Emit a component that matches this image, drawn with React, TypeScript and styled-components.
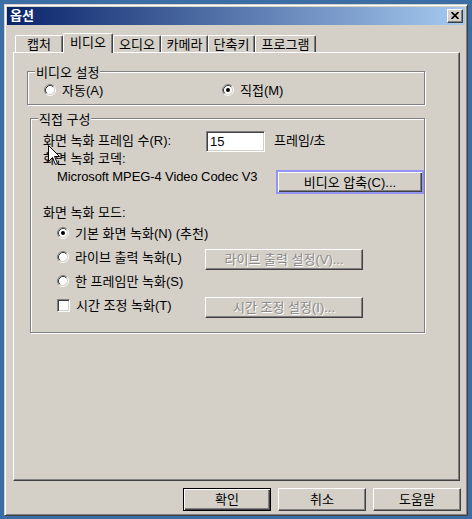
import React from "react";
import styled, { createGlobalStyle, css } from "styled-components";

const Global = createGlobalStyle`
  html, body { margin: 0; padding: 0; background: #3a6ea5; }
  body {
    font-family: "Liberation Sans", "Noto Sans CJK KR", sans-serif;
    font-size: 13px;
    letter-spacing: 0px;
    color: #000;
    white-space: nowrap;
  }
  * { box-sizing: border-box; }
`;

const Desktop = styled.div`
  position: relative;
  width: 472px;
  height: 519px;
  padding: 4px 0 0 4px;
  background: #3a6ea5;
  overflow: hidden;
`;

const Window = styled.div`
  width: 464px;
  height: 512px;
  display: flex;
  flex-direction: column;
  background: #d4d0c8;
  border: 1px solid;
  border-color: #d4d0c8 #404040 #404040 #d4d0c8;
  box-shadow: inset 1px 1px #fff, inset -1px -1px #808080;
  padding: 2px;
`;

const TitleBar = styled.div`
  flex: none;
  height: 18px;
  display: flex;
  align-items: center;
  justify-content: space-between;
  padding: 0 2px 0 3px;
  background: linear-gradient(to right, #0a246a, #a6caf0);
`;

const Title = styled.span`
  color: #fff;
  font-weight: bold;
  line-height: 14px;
`;

const CloseButton = styled.div`
  width: 16px;
  height: 14px;
  background: #d4d0c8;
  border: 1px solid;
  border-color: #fff #404040 #404040 #fff;
  box-shadow: inset -1px -1px #808080;
  display: flex;
  align-items: center;
  justify-content: center;
  padding-bottom: 1px;
`;

const Body = styled.div`
  flex: 1;
  display: flex;
  flex-direction: column;
  padding: 8px 4px 2px 6px;
`;

const TabStrip = styled.div`
  flex: none;
  height: 19px;
  display: flex;
  align-items: flex-end;
  padding-left: 2px;
`;

const Tab = styled.div<{ $w: number; $active?: boolean }>`
  position: relative;
  width: ${(p) => p.$w}px;
  height: ${(p) => (p.$active ? 20 : 17)}px;
  margin-bottom: ${(p) => (p.$active ? -1 : 0)}px;
  z-index: ${(p) => (p.$active ? 1 : 0)};
  background: #d4d0c8;
  border-top: 1px solid #fff;
  border-left: 1px solid #fff;
  border-right: 1px solid #404040;
  box-shadow: inset -1px 0 #808080;
  border-radius: 2px 2px 0 0;
  display: flex;
  align-items: center;
  justify-content: center;
  line-height: 13px;
  padding-bottom: ${(p) => (p.$active ? 3 : 0)}px;
`;

const Panel = styled.div`
  flex: none;
  height: 429px;
  margin-right: 1px;
  background: #d4d0c8;
  border: 1px solid;
  border-color: #fff #404040 #404040 #fff;
  box-shadow: inset -1px -1px #808080;
  padding: 18px 0 0 13px;
  display: flex;
  flex-direction: column;
  align-items: flex-start;
`;

const Group = styled.div<{ $w: number; $indent?: number; $top?: number }>`
  position: relative;
  width: ${(p) => p.$w}px;
  margin-left: ${(p) => p.$indent ?? 0}px;
  margin-top: ${(p) => p.$top ?? 0}px;
  border: 1px solid #808080;
  box-shadow: inset 1px 1px #fff, 1px 1px #fff;
`;

const GroupTitle = styled.span`
  position: absolute;
  top: -6px;
  left: 7px;
  padding: 0 1px;
  background: #d4d0c8;
  line-height: 13px;
`;

const ModeGroupBody = styled.div`
  padding: 10px 0 6px 16px;
  display: grid;
  grid-template-columns: 178px auto;
  height: 32px;
`;

const OptionLine = styled.label`
  display: flex;
  align-items: center;
  gap: 6px;
  height: 16px;
  line-height: 13px;
  & > * { flex: none; }
`;

const ConfigBody = styled.div`
  padding: 12px 0 15px 12px;
  display: flex;
  flex-direction: column;
`;

const FpsRow = styled.div`
  display: flex;
  align-items: center;
  height: 21px;
  line-height: 13px;
`;

const FpsLabel = styled.span`
  width: 163px;
  padding-bottom: 3px;
`;

const TextBox = styled.div`
  width: 59px;
  height: 21px;
  background: #fff;
  border: 1px solid;
  border-color: #808080 #fff #fff #808080;
  box-shadow: inset 1px 1px #404040, inset -1px -1px #d4d0c8;
  padding: 3px 0 0 3px;
  line-height: 13px;
`;

const Unit = styled.span`
  margin-left: 9px;
  padding-bottom: 3px;
`;

const Line = styled.div<{ $top?: number }>`
  height: 13px;
  line-height: 13px;
  margin-top: ${(p) => p.$top ?? 0}px;
`;

const CodecRow = styled.div`
  display: grid;
  grid-template-columns: 219px auto;
  margin-top: 5px;
  padding-left: 14px;
  height: 24px;
`;

const CodecName = styled.span`
  line-height: 13px;
  letter-spacing: -0.1px;
`;

const RecordRow = styled.div`
  display: grid;
  grid-template-columns: 148px auto;
  align-items: start;
  height: 24px;
  padding-left: 14px;
`;

const RecordOptions = styled.div`
  margin-top: 2px;
  display: flex;
  flex-direction: column;
`;

const RowOption = styled.label`
  display: flex;
  align-items: center;
  gap: 6px;
  width: max-content;
  height: 24px;
  line-height: 13px;
  & > * { flex: none; }
`;

const CheckBox = styled.span`
  display: inline-block;
  width: 13px;
  height: 13px;
  background: #fff;
  border: 1px solid;
  border-color: #808080 #fff #fff #808080;
  box-shadow: inset 1px 1px #404040, inset -1px -1px #d4d0c8;
`;

const Button = styled.div<{ $w: number; $h?: number; $kind?: "normal" | "default" | "focus" | "disabled"; $top?: number }>`
  width: ${(p) => p.$w}px;
  height: ${(p) => p.$h ?? 23}px;
  margin-top: ${(p) => p.$top ?? 0}px;
  background: #d4d0c8;
  display: flex;
  align-items: center;
  justify-content: center;
  line-height: 13px;
  border: 1px solid;
  border-color: #fff #404040 #404040 #fff;
  box-shadow: inset -1px -1px #808080;
  ${(p) =>
    p.$kind === "default" &&
    css`
      border-color: #000;
      box-shadow: inset 1px 1px #fff, inset -1px -1px #404040, inset -2px -2px #808080;
    `}
  ${(p) =>
    p.$kind === "focus" &&
    css`
      border: 2px solid #9494f2;
      box-shadow: inset 1px 1px #fff, inset -1px -1px #404040, inset -2px -2px #808080;
    `}
  ${(p) =>
    p.$kind === "disabled" &&
    css`
      color: #8a8a8a;
      text-shadow: 1px 1px 0 #fff;
    `}
`;

const ButtonRow = styled.div`
  flex: none;
  display: flex;
  justify-content: flex-end;
  gap: 7px;
  margin-top: 7px;
`;

const Cursor = styled.svg`
  position: absolute;
  left: 48px;
  top: 145px;
`;

const Radio = ({ checked }: { checked?: boolean }) => (
  <svg width="12" height="12" viewBox="0 0 12 12">
    <circle cx="6" cy="6" r="4.2" fill="#fff" />
    <path d="M2.11 9.89 A5.5 5.5 0 0 1 9.89 2.11" stroke="#808080" fill="none" />
    <path d="M9.89 2.11 A5.5 5.5 0 0 1 2.11 9.89" stroke="#fff" fill="none" />
    <path d="M2.82 9.18 A4.5 4.5 0 0 1 9.18 2.82" stroke="#404040" fill="none" />
    <path d="M9.18 2.82 A4.5 4.5 0 0 1 2.82 9.18" stroke="#d4d0c8" fill="none" />
    {checked && <circle cx="6" cy="6" r="2" fill="#000" />}
  </svg>
);

const tabs: { label: string; w: number }[] = [
  { label: "캡처", w: 48 },
  { label: "비디오", w: 50 },
  { label: "오디오", w: 48 },
  { label: "카메라", w: 47 },
  { label: "단축키", w: 47 },
  { label: "프로그램", w: 61 },
];

export default function App() {
  return (
    <>
      <Global />
      <Desktop>
        <Window>
          <TitleBar>
            <Title>옵션</Title>
            <CloseButton>
              <svg width="8" height="7" viewBox="0 0 8 7">
                <path d="M0.5 0 L7.5 7 M7.5 0 L0.5 7" stroke="#000" strokeWidth="1.7" />
              </svg>
            </CloseButton>
          </TitleBar>
          <Body>
            <TabStrip>
              {tabs.map((t) => (
                <Tab key={t.label} $w={t.w} $active={t.label === "비디오"}>
                  {t.label}
                </Tab>
              ))}
            </TabStrip>
            <Panel>
              <Group $w={398}>
                <GroupTitle>비디오 설정</GroupTitle>
                <ModeGroupBody>
                  <OptionLine>
                    <Radio />
                    자동(A)
                  </OptionLine>
                  <OptionLine>
                    <Radio checked />
                    직접(M)
                  </OptionLine>
                </ModeGroupBody>
              </Group>
              <Group $w={395} $indent={3} $top={13}>
                <GroupTitle>직접 구성</GroupTitle>
                <ConfigBody>
                  <FpsRow>
                    <FpsLabel>화면 녹화 프레임 수(R):</FpsLabel>
                    <TextBox>15</TextBox>
                    <Unit>프레임/초</Unit>
                  </FpsRow>
                  <Line>화면 녹화 코덱:</Line>
                  <CodecRow>
                    <CodecName>Microsoft MPEG-4 Video Codec V3</CodecName>
                    <Button $w={148} $h={24} $kind="focus">
                      비디오 압축(C)...
                    </Button>
                  </CodecRow>
                  <Line $top={12}>화면 녹화 모드:</Line>
                  <RecordOptions>
                    <RecordRow>
                      <RowOption>
                        <Radio checked />
                        기본 화면 녹화(N) (추천)
                      </RowOption>
                    </RecordRow>
                    <RecordRow>
                      <RowOption>
                        <Radio />
                        라이브 출력 녹화(L)
                      </RowOption>
                      <Button $w={158} $h={21} $kind="disabled" $top={4}>
                        라이브 출력 설정(V)...
                      </Button>
                    </RecordRow>
                    <RecordRow>
                      <RowOption>
                        <Radio />
                        한 프레임만 녹화(S)
                      </RowOption>
                    </RecordRow>
                    <RecordRow>
                      <RowOption>
                        <CheckBox />
                        시간 조정 녹화(T)
                      </RowOption>
                      <Button $w={158} $h={21} $kind="disabled" $top={4}>
                        시간 조정 설정(I)...
                      </Button>
                    </RecordRow>
                  </RecordOptions>
                </ConfigBody>
              </Group>
            </Panel>
            <ButtonRow>
              <Button $w={88} $kind="default">확인</Button>
              <Button $w={88}>취소</Button>
              <Button $w={88}>도움말</Button>
            </ButtonRow>
          </Body>
        </Window>
        <Cursor width="13" height="21" viewBox="0 0 13 21">
          <path
            d="M0.5 0.5 L0.5 16.5 L4.5 12.5 L7.5 19.5 L9.5 18.5 L6.5 11.5 L11.5 11.5 Z"
            fill="#fff"
            stroke="#000"
            strokeWidth="1"
          />
        </Cursor>
      </Desktop>
    </>
  );
}
